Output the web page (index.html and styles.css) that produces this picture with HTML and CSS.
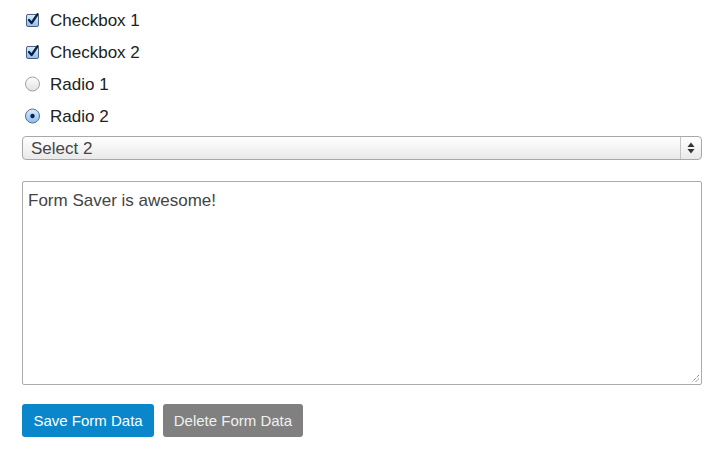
FILE: index.html
```html
<!DOCTYPE html>
<html>
<head>
<meta charset="utf-8">
<link rel="stylesheet" href="styles.css">
</head>
<body>
<form class="form">
  <label class="opt">
    <span class="box"><svg width="16" height="16" viewBox="0 0 16 16"><defs><linearGradient id="cb" x1="0" y1="0" x2="0" y2="1"><stop offset="0" stop-color="#dceefd"/><stop offset="1" stop-color="#86c0f1"/></linearGradient></defs><rect x="1.5" y="2.5" width="12" height="12" rx="1.5" fill="url(#cb)" stroke="#4d5f7f"/><path d="M4 8 L6.6 11 L12.6 2.2" fill="none" stroke="#0f1d3d" stroke-width="2.3" stroke-linecap="round" stroke-linejoin="round"/></svg></span>
    <span class="txt">Checkbox 1</span>
  </label>
  <label class="opt">
    <span class="box"><svg width="16" height="16" viewBox="0 0 16 16"><rect x="1.5" y="2.5" width="12" height="12" rx="1.5" fill="url(#cb)" stroke="#4d5f7f"/><path d="M4 8 L6.6 11 L12.6 2.2" fill="none" stroke="#0f1d3d" stroke-width="2.3" stroke-linecap="round" stroke-linejoin="round"/></svg></span>
    <span class="txt">Checkbox 2</span>
  </label>
  <label class="opt">
    <span class="box"><svg width="16" height="16" viewBox="0 0 16 16"><defs><linearGradient id="rg" x1="0" y1="0" x2="0" y2="1"><stop offset="0" stop-color="#ffffff"/><stop offset="1" stop-color="#e0e0e0"/></linearGradient></defs><circle cx="7.5" cy="8" r="7" fill="url(#rg)" stroke="#a0a0a0"/></svg></span>
    <span class="txt">Radio 1</span>
  </label>
  <label class="opt">
    <span class="box"><svg width="16" height="16" viewBox="0 0 16 16"><defs><linearGradient id="rb" x1="0" y1="0" x2="0" y2="1"><stop offset="0" stop-color="#dceefd"/><stop offset="1" stop-color="#86c0f1"/></linearGradient></defs><circle cx="7.5" cy="8" r="7" fill="url(#rb)" stroke="#5a6a8a"/><circle cx="7.5" cy="8" r="2.2" fill="#142040"/></svg></span>
    <span class="txt">Radio 2</span>
  </label>
  <div class="select">
    <span class="select-val">Select 2</span>
    <span class="select-arrows"><svg width="10" height="14" viewBox="0 0 10 14"><path d="M5 1.5 L8.5 6 L1.5 6 Z" fill="#333"/><path d="M5 12.5 L8.5 8 L1.5 8 Z" fill="#333"/></svg></span>
  </div>
  <div class="textarea">
    <span class="ta-text">Form Saver is awesome!</span>
    <svg class="grip" width="10" height="10" viewBox="0 0 10 10"><path d="M9 2 L2 9 M9 5.5 L5.5 9" stroke="#555" stroke-width="1" stroke-dasharray="1 1"/></svg>
  </div>
  <div class="buttons">
    <button type="button" class="btn btn-save">Save Form Data</button>
    <button type="button" class="btn btn-delete">Delete Form Data</button>
  </div>
</form>
</body>
</html>
```
FILE: styles.css
```css
html, body {
  margin: 0;
  padding: 0;
  background: #ffffff;
}
body {
  font-family: "Helvetica Neue", Helvetica, "Liberation Sans", Arial, sans-serif;
  color: #333333;
  font-size: 17px;
}
.form {
  display: flex;
  flex-direction: column;
  padding: 4px 22px 0 22px;
  width: 680px;
}
.opt {
  display: flex;
  align-items: center;
  height: 32px;
  padding-left: 3px;
}
.box {
  width: 16px;
  height: 16px;
  display: flex;
  align-items: center;
  justify-content: center;
  margin-right: 9px;
}
.txt {
  line-height: 20px;
  color: #222;
  padding-top: 2px;
}
.select {
  margin-top: 4px;
  height: 24px;
  box-sizing: border-box;
  border: 1px solid #a8a8a8;
  border-radius: 4px;
  background: linear-gradient(#ffffff, #e9e9e9);
  display: flex;
  align-items: center;
  box-shadow: inset 0 1px 0 #fff;
}
.select-val {
  flex: 1;
  padding-left: 8px;
  color: #444;
  line-height: 20px;
  padding-top: 1px;
}
.select-arrows {
  width: 20px;
  height: 22px;
  border-left: 1px solid #c4c4c4;
  display: flex;
  align-items: center;
  justify-content: center;
}
.textarea {
  margin-top: 21px;
  height: 204px;
  box-sizing: border-box;
  border: 1px solid #ababab;
  border-radius: 2px;
  padding: 9px 5px;
  position: relative;
}
.ta-text {
  color: #444;
  line-height: 20px;
}
.grip {
  position: absolute;
  right: 1px;
  bottom: 1px;
}
.buttons {
  display: flex;
  gap: 9px;
  margin-top: 19px;
}
.btn {
  height: 33px;
  border: none;
  border-radius: 3px;
  font-family: "Helvetica Neue", Helvetica, "Liberation Sans", Arial, sans-serif;
  font-size: 15px;
  padding: 0 11.5px;
}
.btn-save {
  background: #0a87cb;
  color: #ffffff;
}
.btn-delete {
  background: #808080;
  color: #f0f0f0;
  padding: 0 10.5px;
}
```
